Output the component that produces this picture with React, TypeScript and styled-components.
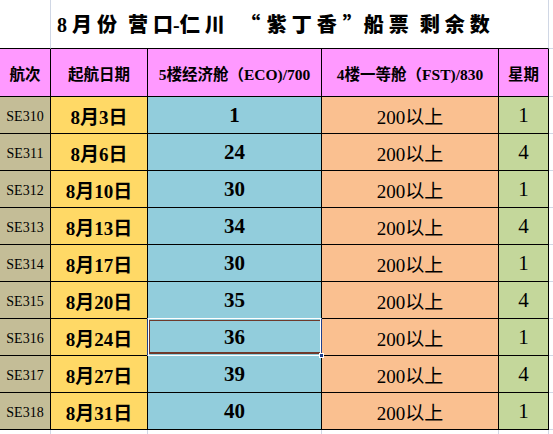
import React from "react";
import styled, { createGlobalStyle, css } from "styled-components";

const GRID = "#d0d7e5";
const LINE = "#000";

const Global = createGlobalStyle`
  html, body { margin: 0; padding: 0; background: #fff; }
  body { overflow: hidden; }
`;

const Sheet = styled.div`
  width: 553px;
  height: 434px;
  overflow: hidden;
  background: #fff;
  display: grid;
  grid-template-columns: 51px 97px 174px 177px 50px 1fr;
  grid-template-rows: 49px 48px repeat(9, 37px) 1fr;
  font-family: "Liberation Serif", "Noto Sans CJK SC", serif;
  color: #000;
`;

const Blank = styled.div<{ $right?: boolean; $bottom?: "dark" | "light" }>`
  box-sizing: border-box;
  border-right: ${(p) => (p.$right ? `1px solid ${GRID}` : "none")};
  border-bottom: ${(p) =>
    p.$bottom === "dark" ? `1px solid ${LINE}` : p.$bottom === "light" ? `1px solid ${GRID}` : "none"};
`;

const TitleCell = styled.div`
  grid-column: 2 / span 4;
  box-sizing: border-box;
  border-right: 1px solid ${GRID};
  border-bottom: 1px solid ${LINE};
  display: flex;
  align-items: center;
  padding-left: 6px;
  padding-bottom: 1px;
  font-size: 20px;
  font-weight: 900;
  letter-spacing: 5px;
  word-spacing: -4px;
  white-space: nowrap;
`;

const Tight = styled.span`
  letter-spacing: 0;
`;

const Quote = styled.span<{ $open?: boolean }>`
  display: inline-block;
  font-family: "Noto Sans CJK SC", sans-serif;
  letter-spacing: 0;
  width: ${(p) => (p.$open ? "37px" : "22px")};
  text-align: ${(p) => (p.$open ? "center" : "left")};
  padding-left: ${(p) => (p.$open ? "4px" : "1px")};
  box-sizing: border-box;
`;

const tones = {
  head: "#ff99ff",
  tan: "#c4bd97",
  gold: "#ffd966",
  aqua: "#92cddc",
  peach: "#fac090",
  olive: "#c4d79b",
};

type Tone = keyof typeof tones;
type Kind = "head" | "code" | "date" | "num" | "text" | "day";

const kinds: Record<Kind, ReturnType<typeof css>> = {
  head: css`
    font-size: 15.5px;
    font-weight: 700;
    padding-top: 1px;
  `,
  code: css`
    font-size: 14px;
    font-weight: 400;
    padding-top: 3px;
  `,
  date: css`
    font-size: 19px;
    font-weight: 700;
  `,
  num: css`
    font-size: 21px;
    font-weight: 700;
  `,
  text: css`
    font-size: 19px;
    font-weight: 400;
  `,
  day: css`
    font-size: 21px;
    font-weight: 400;
  `,
};

const Cell = styled.div<{ $tone: Tone; $kind: Kind; $selected?: boolean }>`
  box-sizing: border-box;
  position: relative;
  background: ${(p) => tones[p.$tone]};
  border-right: 1px solid ${LINE};
  border-bottom: 1px solid ${LINE};
  display: flex;
  align-items: center;
  justify-content: center;
  white-space: nowrap;
  ${(p) => kinds[p.$kind]}
  ${(p) =>
    p.$selected &&
    css`
      &::before {
        content: "";
        position: absolute;
        left: -1px;
        top: -1px;
        right: -1px;
        bottom: -1px;
        border-left: 1px solid #1f3f8c;
        border-right: 1px solid #1f3f8c;
        border-top: 1px solid #fff;
        border-bottom: 1px solid #fff;
        box-shadow: inset 1px 0 0 #fff, inset -1px 0 0 #fff;
      }
      &::after {
        content: "";
        position: absolute;
        left: 1px;
        top: 1px;
        right: 1px;
        bottom: 1px;
        border: 1px solid #6e3a2c;
        border-width: 1px 0 2px 1px;
      }
    `}
`;

const Handle = styled.span`
  position: absolute;
  right: -3px;
  bottom: -3px;
  width: 3px;
  height: 3px;
  background: #1f3f8c;
  border: 1px solid #fff;
  z-index: 2;
`;

const Filler = styled.div<{ $right?: boolean }>`
  box-sizing: border-box;
  border-right: ${(p) => (p.$right ? `1px solid ${GRID}` : "none")};
`;

const rows = [
  { code: "SE310", date: "8月3日", eco: "1", day: "1" },
  { code: "SE311", date: "8月6日", eco: "24", day: "4" },
  { code: "SE312", date: "8月10日", eco: "30", day: "1" },
  { code: "SE313", date: "8月13日", eco: "34", day: "4" },
  { code: "SE314", date: "8月17日", eco: "30", day: "1" },
  { code: "SE315", date: "8月20日", eco: "35", day: "4" },
  { code: "SE316", date: "8月24日", eco: "36", day: "1" },
  { code: "SE317", date: "8月27日", eco: "39", day: "4" },
  { code: "SE318", date: "8月31日", eco: "40", day: "1" },
];

export default function App() {
  return (
    <>
      <Global />
      <Sheet>
        <Blank $right $bottom="dark" />
        <TitleCell>
          8月份 营<Tight>口-</Tight>仁川<Quote $open>“</Quote>紫丁香<Quote>”</Quote>船票 剩余数
        </TitleCell>
        <Blank $bottom="light" />

        <Cell $tone="head" $kind="head">航次</Cell>
        <Cell $tone="head" $kind="head">起航日期</Cell>
        <Cell $tone="head" $kind="head">5楼经济舱（ECO)/700</Cell>
        <Cell $tone="head" $kind="head">4楼一等舱（FST)/830</Cell>
        <Cell $tone="head" $kind="head">星期</Cell>
        <Blank $bottom="light" />

        {rows.map((r) => (
          <React.Fragment key={r.code}>
            <Cell $tone="tan" $kind="code">{r.code}</Cell>
            <Cell $tone="gold" $kind="date">{r.date}</Cell>
            <Cell $tone="aqua" $kind="num" $selected={r.code === "SE316"}>
              {r.eco}
              {r.code === "SE316" && <Handle />}
            </Cell>
            <Cell $tone="peach" $kind="text">200以上</Cell>
            <Cell $tone="olive" $kind="day">{r.day}</Cell>
            <Blank $bottom="light" />
          </React.Fragment>
        ))}

        <Filler $right />
        <Filler $right />
        <Filler $right />
        <Filler $right />
        <Filler $right />
        <Filler />
      </Sheet>
    </>
  );
}
